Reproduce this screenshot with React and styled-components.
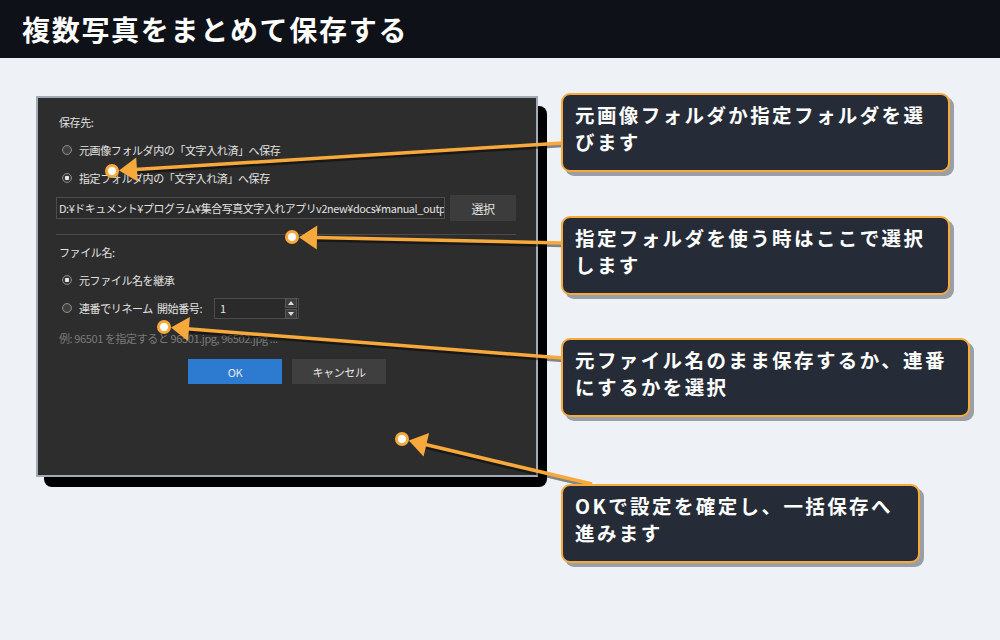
import React from "react";
import styled, { createGlobalStyle } from "styled-components";

const GlobalStyle = createGlobalStyle`
  html {
    background: #eef1f6;
  }
  html, body {
    margin: 0;
    padding: 0;
  }
  body {
    width: 1000px;
    height: 640px;
    overflow: hidden;
    font-family: "Noto Sans CJK JP", "Noto Sans", sans-serif;
  }
`;

const ORANGE = "#f7a93b";

const arrows = [
  { cx: 112, cy: 171, ex: 563, ey: 143 },
  { cx: 292, cy: 237, ex: 563, ey: 243 },
  { cx: 164, cy: 327, ex: 563, ey: 358 },
  { cx: 402, cy: 439, ex: 592, ey: 484 },
];

const Arrow = ({ cx, cy, ex, ey }) => {
  const dx = ex - cx;
  const dy = ey - cy;
  const len = Math.sqrt(dx * dx + dy * dy);
  const ux = dx / len;
  const uy = dy / len;
  const px = -uy;
  const py = ux;
  const tipX = cx + ux * 7;
  const tipY = cy + uy * 7;
  const bx = cx + ux * 25;
  const by = cy + uy * 25;
  const tri = [
    [tipX, tipY],
    [bx + px * 12, by + py * 12],
    [bx - px * 12, by - py * 12],
  ]
    .map((p) => p.join(","))
    .join(" ");
  return (
    <g>
      <line x1={bx} y1={by + 2.5} x2={ex} y2={ey + 2.5} stroke="rgba(0,0,0,0.45)" strokeWidth="3.5" />
      <line x1={bx - ux * 2} y1={by - uy * 2} x2={ex} y2={ey} stroke={ORANGE} strokeWidth="3.5" />
      <polygon points={tri} fill={ORANGE} />
      <circle cx={cx} cy={cy} r="5.5" fill="#fff" stroke={ORANGE} strokeWidth="3" />
    </g>
  );
};

const App = () => {
  return (
    <Page>
      <GlobalStyle />
      <Header>
        <Title>複数写真をまとめて保存する</Title>
      </Header>
      <Main>
        <Dialog>
          <SectionLabel>保存先:</SectionLabel>
          <RadioRow>
            <Radio />
            元画像フォルダ内の「文字入れ済」へ保存
          </RadioRow>
          <RadioRow>
            <Radio checked />
            指定フォルダ内の「文字入れ済」へ保存
          </RadioRow>
          <PathRow>
            <PathInput>
              <PathText>D:¥ドキュメント¥プログラム¥集合写真文字入れアプリv2new¥docs¥manual_outp</PathText>
            </PathInput>
            <SelectButton>選択</SelectButton>
          </PathRow>
          <Separator />
          <SectionLabel gap={4}>ファイル名:</SectionLabel>
          <RadioRow>
            <Radio checked />
            元ファイル名を継承
          </RadioRow>
          <RadioRow>
            <Radio />
            連番でリネーム&nbsp; 開始番号:
            <SpinBox>
              <span>1</span>
              <SpinButtons>
                <SpinButton>
                  <svg width="6" height="4" viewBox="0 0 6 4">
                    <polygon points="0,4 3,0 6,4" fill="#ddd" />
                  </svg>
                </SpinButton>
                <SpinButton>
                  <svg width="6" height="4" viewBox="0 0 6 4">
                    <polygon points="0,0 6,0 3,4" fill="#ddd" />
                  </svg>
                </SpinButton>
              </SpinButtons>
            </SpinBox>
          </RadioRow>
          <Hint>例: 96501 を指定すると 96501.jpg, 96502.jpg ...</Hint>
          <ButtonRow>
            <DialogButton primary>OK</DialogButton>
            <DialogButton>キャンセル</DialogButton>
          </ButtonRow>
        </Dialog>
        <CalloutColumn>
          <Callout width={389} top={35}>
            元画像フォルダか指定フォルダを選
            <br />
            びます
          </Callout>
          <Callout width={389} top={44}>
            指定フォルダを使う時はここで選択
            <br />
            します
          </Callout>
          <Callout width={409} top={43}>
            元ファイル名のまま保存するか、連番
            <br />
            にするかを選択
          </Callout>
          <Callout width={359} top={67}>
            OKで設定を確定し、一括保存へ
            <br />
            進みます
          </Callout>
        </CalloutColumn>
      </Main>
      <Arrows width="1000" height="640" viewBox="0 0 1000 640">
        {arrows.map((a, i) => (
          <Arrow key={i} {...a} />
        ))}
      </Arrows>
    </Page>
  );
};

const Page = styled.div`
  position: relative;
  width: 1000px;
  height: 640px;
`;

const Header = styled.header`
  height: 58px;
  background: #0e1117;
  display: flex;
  align-items: center;
  padding-left: 22px;
  box-sizing: border-box;
`;

const Title = styled.h1`
  margin: 0;
  color: #fff;
  font-size: 28px;
  font-weight: 700;
  letter-spacing: 1.7px;
  line-height: 1;
`;

const Main = styled.main`
  display: flex;
  align-items: flex-start;
  gap: 23px;
  padding-left: 36px;
`;

const Dialog = styled.section`
  position: relative;
  margin-top: 38px;
  width: 502px;
  height: 381px;
  box-sizing: border-box;
  background: #2d2d2d;
  border: 2px solid #a2aab8;
  padding: 11px 20px 0 18px;
  display: flex;
  flex-direction: column;
  color: #e2e2e2;
  font-size: 11px;
  letter-spacing: -0.4px;

  &::after {
    content: "";
    position: absolute;
    left: 6px;
    top: 8px;
    right: -11px;
    bottom: -12px;
    background: #000;
    border-radius: 8px;
    z-index: -1;
  }
`;

const SectionLabel = styled.div`
  margin-top: ${(p) => p.gap || 0}px;
  height: 27px;
  line-height: 27px;
  padding-left: 3px;
`;

const RadioRow = styled.div`
  height: 28px;
  display: flex;
  align-items: center;
  padding-left: 6px;
  gap: 7px;
  white-space: nowrap;
`;

const Radio = styled.span`
  width: 10px;
  height: 10px;
  box-sizing: border-box;
  border-radius: 50%;
  border: 1px solid #8a8a8a;
  background: ${(p) =>
    p.checked
      ? "radial-gradient(circle, #e8e8e8 0 2px, #3a3a3a 2.5px)"
      : "radial-gradient(circle, #3e3e3e 0 2px, #4a4a4a 4px)"};
  flex-shrink: 0;
`;

const PathRow = styled.div`
  margin-top: 3px;
  display: flex;
  align-items: center;
  gap: 5px;
`;

const PathInput = styled.div`
  width: 389px;
  height: 22px;
  box-sizing: border-box;
  border: 1px solid #4c4c4c;
  background: #2a2a2a;
  padding-left: 2px;
  overflow: hidden;
`;

const PathText = styled.span`
  display: block;
  line-height: 20px;
  font-size: 10.9px;
  white-space: nowrap;
`;

const SelectButton = styled.div`
  width: 66px;
  height: 26px;
  background: #3c3c3c;
  display: flex;
  align-items: center;
  justify-content: center;
  font-size: 12px;
`;

const Separator = styled.div`
  margin-top: 13px;
  height: 1px;
  background: #4a4a4a;
`;

const SpinBox = styled.div`
  margin-left: 5px;
  width: 85px;
  height: 21px;
  box-sizing: border-box;
  border: 1px solid #4c4c4c;
  background: #2a2a2a;
  display: flex;
  align-items: center;
  justify-content: space-between;
  padding: 0 1px 0 5px;
`;

const SpinButtons = styled.div`
  display: flex;
  flex-direction: column;
  gap: 1px;
`;

const SpinButton = styled.div`
  width: 10px;
  height: 8px;
  background: #3e3e3e;
  border: 1px solid #555;
  display: flex;
  align-items: center;
  justify-content: center;
`;

const Hint = styled.div`
  margin-top: 8px;
  height: 16px;
  line-height: 16px;
  color: #7a7a7a;
  padding-left: 3px;
`;

const ButtonRow = styled.div`
  margin-top: 13px;
  display: flex;
  justify-content: center;
  gap: 10px;
  padding-left: 2px;
`;

const DialogButton = styled.div`
  width: 94px;
  height: 25px;
  background: ${(p) => (p.primary ? "#2d7bd1" : "#3f3f3f")};
  color: #e8e8e8;
  display: flex;
  align-items: center;
  justify-content: center;
  font-size: 11px;
`;

const CalloutColumn = styled.div`
  display: flex;
  flex-direction: column;
  align-items: flex-start;
`;

const Callout = styled.div`
  position: relative;
  z-index: 2;
  margin-top: ${(p) => p.top}px;
  width: ${(p) => p.width}px;
  height: 79px;
  box-sizing: border-box;
  background: #262c37;
  border: 2px solid ${ORANGE};
  border-radius: 9px;
  box-shadow: 4px 4px 0 #9a9ea5;
  padding: 6px 12px 0 12px;
  color: #fff;
  font-size: 19.5px;
  font-weight: 700;
  letter-spacing: 2.4px;
  line-height: 27px;
  white-space: nowrap;
`;

const Arrows = styled.svg`
  position: absolute;
  left: 0;
  top: 0;
  z-index: 1;
  pointer-events: none;
`;

export default App;
